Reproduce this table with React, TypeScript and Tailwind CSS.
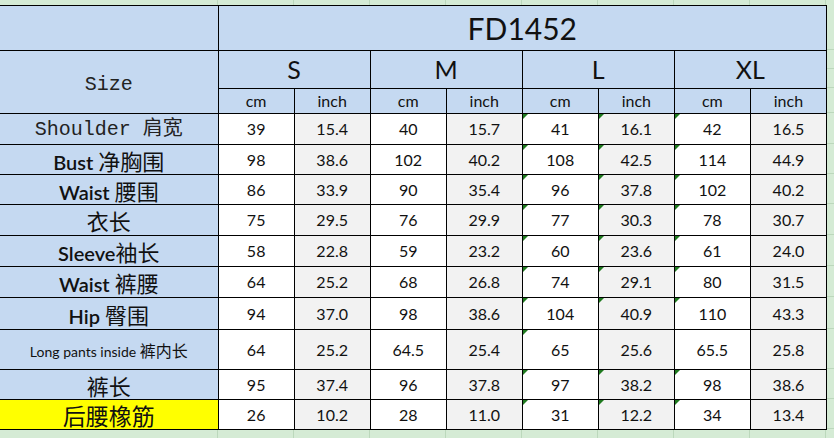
import React from 'react';

type Row = {
  label: React.ReactNode;
  values: string[];
  height: string;
  flags: number[];
  yellow?: boolean;
};

const latin = "font-['Lato','Noto_Sans','Noto_Sans_CJK_SC',sans-serif]";
const mono = "font-['Liberation_Mono','Noto_Sans_CJK_SC',monospace]";

const Cjk: React.FC<{ children: React.ReactNode; size?: string }> = ({ children, size = 'text-[22px]' }) => (
  <span className={`font-['Noto_Sans_CJK_SC',sans-serif] font-normal ${size}`}>{children}</span>
);

const rows: Row[] = [
  {
    label: <span className={`${mono} text-[20px] text-[#222]`}>Shoulder 肩宽</span>,
    values: ['39', '15.4', '40', '15.7', '41', '16.1', '42', '16.5'],
    height: 'h-[31px]',
    flags: [4, 5, 6],
  },
  {
    label: (
      <span className="text-[20px] font-semibold">
        Bust <Cjk>净胸围</Cjk>
      </span>
    ),
    values: ['98', '38.6', '102', '40.2', '108', '42.5', '114', '44.9'],
    height: 'h-[30px]',
    flags: [4, 5, 6],
  },
  {
    label: (
      <span className="text-[20px] font-semibold">
        Waist <Cjk>腰围</Cjk>
      </span>
    ),
    values: ['86', '33.9', '90', '35.4', '96', '37.8', '102', '40.2'],
    height: 'h-[30px]',
    flags: [4, 5, 6],
  },
  {
    label: <Cjk>衣长</Cjk>,
    values: ['75', '29.5', '76', '29.9', '77', '30.3', '78', '30.7'],
    height: 'h-[31px]',
    flags: [4, 5, 6],
  },
  {
    label: (
      <span className="text-[20px] font-semibold">
        Sleeve<Cjk>袖长</Cjk>
      </span>
    ),
    values: ['58', '22.8', '59', '23.2', '60', '23.6', '61', '24.0'],
    height: 'h-[31px]',
    flags: [4, 5, 6],
  },
  {
    label: (
      <span className="text-[20px] font-semibold">
        Waist <Cjk>裤腰</Cjk>
      </span>
    ),
    values: ['64', '25.2', '68', '26.8', '74', '29.1', '80', '31.5'],
    height: 'h-[31px]',
    flags: [4, 5, 6],
  },
  {
    label: (
      <span className="text-[20px] font-semibold">
        Hip <Cjk>臀围</Cjk>
      </span>
    ),
    values: ['94', '37.0', '98', '38.6', '104', '40.9', '110', '43.3'],
    height: 'h-[32px]',
    flags: [4, 5, 6],
  },
  {
    label: (
      <span className="text-[14px]">
        Long pants inside <Cjk size="text-[16px]">裤内长</Cjk>
      </span>
    ),
    values: ['64', '25.2', '64.5', '25.4', '65', '25.6', '65.5', '25.8'],
    height: 'h-[40px]',
    flags: [4],
  },
  {
    label: <Cjk>裤长</Cjk>,
    values: ['95', '37.4', '96', '37.8', '97', '38.2', '98', '38.6'],
    height: 'h-[30px]',
    flags: [4, 5, 6],
  },
  {
    label: <Cjk size="text-[23px]">后腰橡筋</Cjk>,
    values: ['26', '10.2', '28', '11.0', '31', '12.2', '34', '13.4'],
    height: 'h-[30px]',
    flags: [4, 5, 6],
    yellow: true,
  },
];

const sizes = ['S', 'M', 'L', 'XL'];
const stripCols = ['w-[218px]', 'w-[76px]', 'w-[76px]', 'w-[76px]', 'w-[76px]', 'w-[76px]', 'w-[76px]', 'w-[76px]', 'w-[76px]'];
const sideLines = ['h-[45px]', 'h-[19px]', 'h-[19px]', 'h-[25px]', 'h-[31px]', 'h-[30px]', 'h-[30px]', 'h-[31px]', 'h-[31px]', 'h-[31px]', 'h-[32px]', 'h-[40px]', 'h-[30px]', 'h-[30px]'];

const GreenStrip: React.FC<{ height: string }> = ({ height }) => (
  <div className={`flex ${height}`}>
    {stripCols.map((w, i) => (
      <div key={i} className={`${w} shrink-0 border-r border-[#bcd8bc]`} />
    ))}
  </div>
);

const App: React.FC = () => {
  const cell = 'border border-black p-0 text-center align-middle leading-none';

  return (
    <div className={`w-[834px] h-[438px] overflow-hidden bg-[#d5ebd5] text-[#111] ${latin}`}>
      <GreenStrip height="h-[5px]" />
      <div className="flex items-start">
        <table className="table-fixed border-collapse w-[827px] shrink-0">
          <colgroup>
            <col className="w-[218px]" />
            {Array.from({ length: 8 }).map((_, i) => (
              <col key={i} className="w-[76px]" />
            ))}
          </colgroup>
          <tbody>
            <tr className="h-[45px]">
              <td className={`${cell} border-l-0 bg-[#c5d9f1]`} />
              <td colSpan={8} className={`${cell} bg-[#c5d9f1] text-[30px]`}>
                FD1452
              </td>
            </tr>
            <tr className="h-[38px]">
              <td rowSpan={2} className={`${cell} border-l-0 bg-[#c5d9f1]`}>
                <span className={`${mono} text-[20px] text-[#222] relative top-[3px]`}>Size</span>
              </td>
              {sizes.map(s => (
                <td key={s} colSpan={2} className={`${cell} bg-[#c5d9f1] text-[25px]`}>
                  {s}
                </td>
              ))}
            </tr>
            <tr className="h-[25px]">
              {sizes.map(s => (
                <React.Fragment key={s}>
                  <td className={`${cell} bg-[#c5d9f1] text-[16px]`}>cm</td>
                  <td className={`${cell} bg-[#c5d9f1] text-[16px]`}>inch</td>
                </React.Fragment>
              ))}
            </tr>
            {rows.map((row, r) => (
              <tr key={r} className={row.height}>
                <td className={`${cell} border-l-0 ${row.yellow ? 'bg-[#ffff00]' : 'bg-[#c5d9f1]'}`}>
                  <div className="h-[18px] leading-[18px] whitespace-nowrap">{row.label}</div>
                </td>
                {row.values.map((v, i) => (
                  <td
                    key={i}
                    className={`${cell} relative text-[16px] ${i % 2 === 1 ? 'bg-[#f2f2f2]' : 'bg-white'}`}
                  >
                    {row.flags.includes(i) && (
                      <span className="absolute left-0 top-0 h-0 w-0 border-t-[5px] border-r-[5px] border-t-[#1f7a1f] border-r-transparent" />
                    )}
                    {v}
                  </td>
                ))}
              </tr>
            ))}
          </tbody>
        </table>
        <div className="flex flex-1 flex-col">
          {sideLines.map((h, i) => (
            <div key={i} className={`${h} border-b border-[#bcd8bc]`} />
          ))}
        </div>
      </div>
      <GreenStrip height="h-[12px]" />
    </div>
  );
};

export default App;
